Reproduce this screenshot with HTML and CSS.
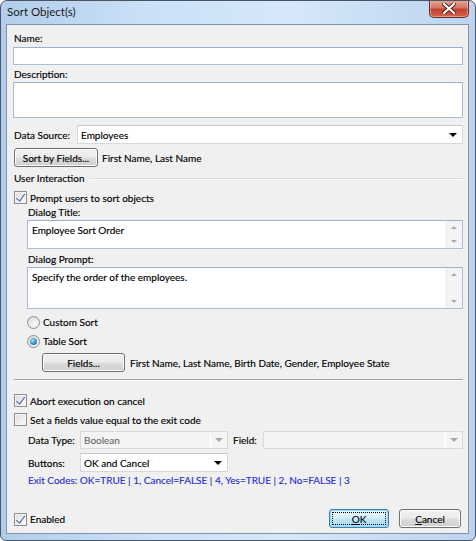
FILE: index.html
```html
<!DOCTYPE html>
<html>
<head>
<meta charset="utf-8">
<link rel="stylesheet" href="styles.css">
</head>
<body>
<div class="window">
  <div class="titlebar">
    <span class="title">Sort Object(s)</span>
    <div class="close">
      <svg width="14" height="11" viewBox="0 0 14 11"><path d="M2 1 L12 10 M12 1 L2 10" stroke="#5a1a14" stroke-width="4" stroke-linecap="square"/><path d="M2 1 L12 10 M12 1 L2 10" stroke="#fff" stroke-width="2.2" stroke-linecap="square"/></svg>
    </div>
  </div>
  <div class="client">
    <div class="label lbl-name">Name:</div>
    <div class="textbox name-box"></div>
    <div class="label lbl-desc">Description:</div>
    <div class="textbox desc-box"></div>

    <div class="row ds-row">
      <span class="ds-label">Data Source:</span>
      <div class="combo ds-combo"><span class="combo-text">Employees</span><span class="arrow"></span></div>
    </div>
    <div class="row sort-row">
      <div class="btn sort-btn">Sort by Fields...</div>
      <span class="btn-info">First Name, Last Name</span>
    </div>

    <div class="group-head"><span>User Interaction</span><span class="hline"></span></div>
    <div class="check-row prompt-row"><span class="cb checked"></span><span>Prompt users to sort objects</span></div>

    <div class="indent">
      <div class="label lbl-dtitle">Dialog Title:</div>
      <div class="textbox ta title-ta">
        <span class="ta-text">Employee Sort Order</span>
        <div class="vscroll"><span class="up"></span><span class="down"></span></div>
      </div>
      <div class="label lbl-dprompt">Dialog Prompt:</div>
      <div class="textbox ta prompt-ta">
        <span class="ta-text">Specify the order of the employees.</span>
        <div class="vscroll"><span class="up"></span><span class="down"></span></div>
      </div>
      <div class="radio-row custom-row"><span class="radio"></span><span>Custom Sort</span></div>
      <div class="radio-row table-row"><span class="radio on"></span><span>Table Sort</span></div>
      <div class="row fields-row">
        <div class="btn fields-btn">Fields...</div>
        <span class="btn-info">First Name, Last Name, Birth Date, Gender, Employee State</span>
      </div>
    </div>

    <div class="separator"></div>

    <div class="check-row abort-row"><span class="cb checked"></span><span>Abort execution on cancel</span></div>
    <div class="check-row setf-row"><span class="cb"></span><span>Set a fields value equal to the exit code</span></div>

    <div class="indent">
      <div class="row dt-row">
        <span class="opt-label">Data Type:</span>
        <div class="combo disabled dt-combo"><span class="combo-text">Boolean</span><span class="arrow-box"><span class="arrow"></span></span></div>
        <span class="field-label">Field:</span>
        <div class="combo disabled field-combo"><span class="combo-text"></span><span class="arrow-box"><span class="arrow"></span></span></div>
      </div>
      <div class="row bt-row">
        <span class="opt-label">Buttons:</span>
        <div class="combo bt-combo"><span class="combo-text">OK and Cancel</span><span class="arrow"></span></div>
      </div>
      <div class="exit-codes">Exit Codes: OK=TRUE | 1, Cancel=FALSE | 4, Yes=TRUE | 2, No=FALSE | 3</div>
    </div>

    <div class="footer">
      <div class="check-row enabled-row"><span class="cb checked"></span><span>Enabled</span></div>
      <div class="footer-btns">
        <div class="btn ok-btn"><span class="focus"><span><u>O</u>K</span></span></div>
        <div class="btn cancel-btn"><u>C</u>ancel</div>
      </div>
    </div>
  </div>
</div>
</body>
</html>
```

FILE: styles.css
```css
* { box-sizing: border-box; }
html, body { margin: 0; padding: 0; background: #fff; }
body {
  font-family: "Segoe UI", Lato, "Noto Sans", sans-serif;
  font-size: 10px;
  color: #000;
  line-height: 14px;
  -webkit-text-stroke: 0.15px #000;
}
.window {
  width: 476px;
  height: 541px;
  border: 1px solid #4a5563;
  border-radius: 7px 7px 6px 6px;
  background: linear-gradient(90deg, #b2cdeb 0%, #c9e0f7 30%, #d6e8fa 60%, #bcd4ee 100%);
  padding: 0 6px 6px 5px;
  display: flex;
  flex-direction: column;
  overflow: hidden;
}
.titlebar {
  height: 23px;
  display: flex;
  align-items: flex-start;
  justify-content: space-between;
  flex: none;
}
.title {
  margin-top: 4px;
  margin-left: 1px;
  font-size: 11.5px;
  color: #1b1b1b;
  -webkit-text-stroke: 0;
}
.close {
  width: 40px;
  height: 18px;
  margin-top: -1px;
  border: 1px solid #6b2a23;
  border-top: none;
  border-radius: 0 0 5px 5px;
  background: linear-gradient(180deg, #e9a99b 0%, #d47665 45%, #c2402f 55%, #d6634c 100%);
  display: flex;
  align-items: center;
  justify-content: center;
  box-shadow: inset 0 0 0 1px rgba(255,255,255,0.35);
}
.client {
  flex: 1;
  background: #f0f0f0;
  border: 1px solid #8193ab;
  padding: 0 5px 0 6px;
  display: flex;
  flex-direction: column;
}
.label { height: 14px; }
.lbl-name { margin-top: 6px; margin-left: 1px; }
.textbox {
  background: #fff;
  border: 1px solid #a9bedb;
  border-top-color: #9ab0d3;
}
.name-box { margin-top: 2px; height: 18px; }
.lbl-desc { margin-top: 2px; margin-left: 1px; }
.desc-box { margin-top: 1px; height: 36px; }

.row { display: flex; align-items: center; }
.ds-row { margin-top: 7px; height: 19px; }
.ds-label { width: 63px; margin-left: 1px; }
.combo {
  flex: 1;
  height: 19px;
  background: #fff;
  border: 1px solid #d5d9df;
  border-top-color: #c6cad0;
  display: flex;
  align-items: center;
  padding-left: 3px;
}
.combo-text { flex: 1; }
.arrow {
  width: 0; height: 0;
  border-left: 4px solid transparent;
  border-right: 4px solid transparent;
  border-top: 4px solid #000;
  margin-right: 5px;
}
.sort-row { margin-top: 4px; height: 19px; }
.btn {
  height: 19px;
  border: 1px solid #707070;
  border-radius: 3px;
  background: linear-gradient(180deg, #f2f2f2 0%, #ebebeb 48%, #dddddd 52%, #cfcfcf 100%);
  box-shadow: inset 0 0 0 1px #fcfcfc;
  display: flex;
  align-items: center;
  justify-content: center;
  flex: none;
}
.sort-btn { width: 84px; margin-left: 1px; }
.btn-info { margin-left: 4px; }

.group-head {
  margin-top: 4px;
  height: 14px;
  display: flex;
  align-items: center;
  margin-left: 1px;
}
.hline {
  flex: 1;
  margin-left: 5px;
  margin-top: 1px;
  border-top: 1px solid #d5dfe5;
  border-bottom: 1px solid #fff;
}
.check-row {
  display: flex;
  align-items: center;
  height: 15px;
}
.cb {
  width: 13px;
  height: 13px;
  border: 1px solid #8e8f8f;
  background: linear-gradient(135deg, #dcdcdc 0%, #f0f0f0 60%, #fdfdfd 100%);
  box-shadow: inset 0 0 0 1px #f4f4f4;
  margin-right: 3px;
  margin-left: 1px;
  position: relative;
  flex: none;
}
.cb.checked::after {
  content: "";
  position: absolute;
  left: 3px;
  top: 0px;
  width: 4px;
  height: 8px;
  border-right: 1.5px solid #3456b0;
  border-bottom: 1.5px solid #3456b0;
  transform: rotate(35deg);
  transform-origin: center;
}
.prompt-row { margin-top: 5px; }

.indent { padding-left: 14px; display: flex; flex-direction: column; }
.lbl-dtitle { margin-top: 0; margin-left: 1px; }
.ta {
  display: flex;
  align-items: flex-start;
  padding-left: 4px;
  padding-top: 2px;
}
.ta-text { flex: 1; }
.title-ta { margin-top: 1px; height: 29px; }
.lbl-dprompt { margin-top: 3px; margin-left: 1px; }
.prompt-ta { margin-top: 1px; height: 42px; }
.vscroll {
  width: 17px;
  align-self: stretch;
  margin-top: -2px;
  background: #f3f3f3;
  display: flex;
  flex-direction: column;
  justify-content: space-between;
  align-items: center;
  padding: 5px 0 5px;
}
.up, .down {
  width: 0; height: 0;
  border-left: 3px solid transparent;
  border-right: 3px solid transparent;
}
.up { border-bottom: 3px solid #a8a8a8; }
.down { border-top: 3px solid #a8a8a8; }

.radio-row {
  display: flex;
  align-items: center;
  height: 16px;
}
.custom-row { margin-top: 5px; }
.table-row { margin-top: 3px; }
.radio {
  width: 13px;
  height: 13px;
  border-radius: 50%;
  border: 1px solid #8e8f8f;
  background: radial-gradient(circle at 65% 65%, #fafafa 0%, #e6e6e6 55%, #d2d2d2 100%);
  margin-right: 3px;
  margin-left: 0;
  flex: none;
  display: flex;
  align-items: center;
  justify-content: center;
}
.radio.on::after {
  content: "";
  width: 7px;
  height: 7px;
  border-radius: 50%;
  background: radial-gradient(circle at 40% 35%, #b8e4f8 0%, #3a9fd6 45%, #0f4f87 100%);
}
.fields-row { margin-top: 4px; height: 19px; padding-left: 15px; }
.fields-btn { width: 83px; }
.fields-row .btn-info { margin-left: 5px; }

.separator {
  margin-top: 7px;
  height: 2px;
  border-top: 1px solid #a0a0a0;
  border-bottom: 1px solid #fff;
  margin-left: 1px;
}
.abort-row { margin-top: 12px; }
.setf-row { margin-top: 4px; }

.dt-row { margin-top: 4px; height: 18px; }
.opt-label { width: 52px; margin-left: 1px; }
.combo.disabled {
  border: 1px solid #d9d9d9;
  background: #f4f4f4;
  color: #6d6d6d;
  -webkit-text-stroke: 0.15px #6d6d6d;
  padding-right: 0;
}
.arrow-box {
  width: 17px;
  align-self: stretch;
  display: flex;
  align-items: center;
  justify-content: center;
  background: #f4f4f4;
  border-left: 1px solid #fff;
}
.arrow-box .arrow { border-top-color: #a6a6a6; margin-right: 0; }
.dt-combo { flex: none; width: 148px; height: 18px; }
.field-label { width: 30px; margin-left: 5px; }
.field-combo { height: 18px; }
.bt-row { margin-top: 4px; height: 19px; }
.bt-combo { flex: none; width: 148px; }
.exit-codes {
  margin-top: 1px;
  height: 14px;
  color: #2e2ed6;
  -webkit-text-stroke: 0.15px #2e2ed6;
  margin-left: 1px;
}

.footer {
  margin-top: 22px;
  display: flex;
  align-items: center;
  justify-content: space-between;
  height: 19px;
}
.enabled-row { margin-top: 1px; }
.footer-btns { display: flex; gap: 10px; }
.ok-btn {
  width: 60px;
  border-color: #3c7fb1;
  box-shadow: inset 0 0 0 1px #94dbf7;
  background: linear-gradient(180deg, #eaf6fd 0%, #d9f0fc 48%, #bee6fd 52%, #a7d9f5 100%);
  padding: 2px;
}
.focus {
  border: 1px dotted #000;
  width: 100%;
  height: 100%;
  display: flex;
  align-items: center;
  justify-content: center;
}
.cancel-btn { width: 62px; margin-right: 2px; }
u { text-decoration: underline; text-underline-offset: 1px; }
```
